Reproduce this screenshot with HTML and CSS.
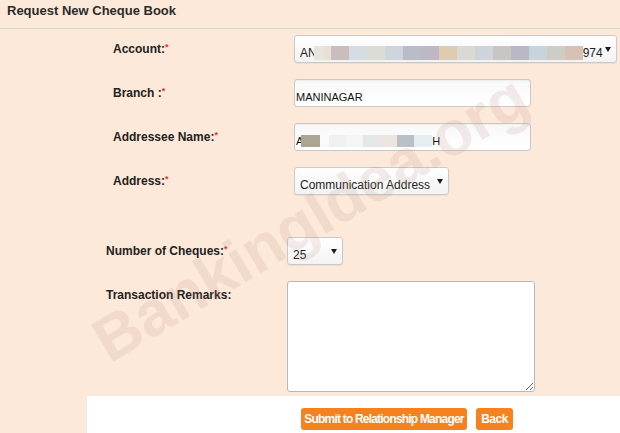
FILE: index.html
```html
<!DOCTYPE html>
<html lang="en">
<head>
<meta charset="utf-8">
<title>Request New Cheque Book</title>
<link rel="stylesheet" href="styles.css">
</head>
<body>
<div class="page">
  <div class="header">Request New Cheque Book</div>

  <div class="form-group group-top">
    <div class="label">Account:<span class="req">*</span></div>
    <div class="select select-account">AN<span class="mosaic"><i class="m1"></i><i class="m2"></i><i class="m3"></i><i class="m4"></i><i class="m5"></i><i class="m6"></i><i class="m7"></i><i class="m8"></i><i class="m9"></i><i class="m10"></i><i class="m11"></i><i class="m12"></i><i class="m13"></i><i class="m14"></i><i class="m15"></i><i class="m16"></i></span>974</div>

    <div class="label">Branch :<span class="req">*</span></div>
    <input class="input input-wide" type="text" value="MANINAGAR">

    <div class="label">Addressee Name:<span class="req">*</span></div>
    <div class="input input-wide">A<span class="mosaic mosaic-name"><i class="n1"></i><i class="n2"></i><i class="n3"></i><i class="n4"></i><i class="n5"></i><i class="n6"></i><i class="n7"></i><i class="n8"></i></span>H</div>

    <div class="label">Address:<span class="req">*</span></div>
    <div class="select select-address">Communication Address</div>
  </div>

  <div class="form-group group-bottom">
    <div class="label">Number of Cheques:<span class="req">*</span></div>
    <div class="select select-count">25</div>

    <div class="label label-top">Transaction Remarks:</div>
    <textarea class="remarks"></textarea>
  </div>

  <div class="footer">
    <button class="btn btn-submit" type="button">Submit to Relationship Manager</button>
    <button class="btn btn-back" type="button">Back</button>
  </div>

  <div class="watermark">BankingIdea.org</div>
</div>
</body>
</html>
```

FILE: styles.css
```css
* { box-sizing: border-box; }

html, body {
  margin: 0;
  padding: 0;
  height: 100%;
}

body {
  background: #fde9d9;
  font-family: "Liberation Sans", Arial, sans-serif;
  color: #222;
  overflow: hidden;
}

.page {
  position: relative;
  width: 620px;
  height: 433px;
  overflow: hidden;
}

.header {
  height: 29px;
  padding: 3px 7px 0;
  font-size: 13px;
  line-height: 16px;
  font-weight: bold;
  color: #2b2b2b;
  border-bottom: 1px solid #dcd6d1;
}

.form-group {
  display: grid;
  grid-template-columns: 181px auto;
  row-gap: 16px;
  align-items: center;
  justify-items: start;
}

.group-top {
  margin-top: 6px;
  padding-left: 113px;
}

.group-bottom {
  margin-top: 42px;
  padding-left: 106px;
}

.label {
  font-size: 12px;
  line-height: 14px;
  font-weight: bold;
  color: #222;
}

.label-top {
  align-self: start;
  padding-top: 7px;
}

.req {
  color: #e8322e;
  font-size: 9px;
  line-height: 10px;
  vertical-align: top;
}

.select {
  position: relative;
  height: 28px;
  padding: 10px 20px 2px 5px;
  font-size: 12px;
  line-height: 14px;
  color: #222;
  white-space: nowrap;
  background: linear-gradient(#ffffff, #f3f3f3);
  border: 1px solid #c9c9c9;
  border-radius: 3px;
  box-shadow: 0 1px 1px rgba(0, 0, 0, 0.06);
}

.select::after {
  content: "";
  position: absolute;
  right: 5px;
  top: 11px;
  border-left: 3px solid transparent;
  border-right: 3px solid transparent;
  border-top: 5px solid #1a1a1a;
}

.select-account { width: 323px; }
.select-address { width: 155px; }
.select-count { width: 56px; }

.input {
  display: block;
  height: 28px;
  margin: 0;
  padding: 10px 2px 2px 1px;
  font-family: "Liberation Sans", Arial, sans-serif;
  font-size: 11px;
  line-height: 14px;
  color: #111;
  white-space: nowrap;
  background: linear-gradient(#f8f8f8, #ffffff);
  border: 1px solid #c8c8c8;
  border-radius: 3px;
  box-shadow: inset 0 1px 1px rgba(0, 0, 0, 0.04);
  outline: none;
}

.input-wide { width: 237px; }

.mosaic {
  display: inline-flex;
  vertical-align: top;
  height: 14px;
  margin-left: -3px;
}

.mosaic i {
  display: block;
  width: 18px;
  height: 14px;
}

.m1 { background: #e6e4dd; width: 10px !important; }
.m2 { background: #e8e0d6; width: 7px !important; }
.m3 { background: #c9bebd; }
.m4 { background: #d5dce4; }
.m5 { background: #dbdcd3; }
.m6 { background: #cfd5dc; }
.m7 { background: #b8bdc8; }
.m8 { background: #bdb8c3; }
.m9 { background: #dfcbb2; }
.m10 { background: #d9dad3; }
.m11 { background: #d0d3d9; }
.m12 { background: #c9c5c5; }
.m13 { background: #b9b8c5; }
.m14 { background: #c9d3dc; }
.m15 { background: #cdcdc6; }
.m16 { background: #d6c2b5; }

.mosaic-name {
  height: 12px;
  margin-top: 1px;
  margin-left: -2px;
}

.mosaic-name i { height: 12px; width: 17px; }

.n1 { background: #aca594; width: 19px !important; }
.n2 { background: #fafafa; width: 9px !important; }
.n3 { background: #eff0f1; }
.n4 { background: #f4f5f5; }
.n5 { background: #e3e7ea; }
.n6 { background: #ece5df; }
.n7 { background: #b9c0c8; }
.n8 { background: #e6edef; width: 18px !important; }

.remarks {
  display: block;
  width: 248px;
  height: 111px;
  margin: 0;
  background: #fff;
  border: 1px solid #b8b8b8;
  border-radius: 3px;
  font-family: "Liberation Sans", Arial, sans-serif;
  font-size: 12px;
}

.footer {
  display: flex;
  gap: 9px;
  height: 37px;
  margin-top: 4px;
  margin-left: 87px;
  padding: 12px 0 0 214px;
  background: #fff;
}

.btn {
  height: 22px;
  padding: 0;
  border: none;
  border-radius: 3px;
  background: #f5821f;
  color: #fff;
  font-family: "Liberation Sans", Arial, sans-serif;
  font-size: 12px;
  font-weight: bold;
  letter-spacing: -0.8px;
  text-align: center;
  cursor: pointer;
}

.btn-submit { width: 166px; }
.btn-back { width: 37px; letter-spacing: -0.5px; }

.watermark {
  position: absolute;
  left: 310px;
  top: 218px;
  transform: translate(-50%, -50%) rotate(-31deg);
  font-size: 63px;
  font-weight: bold;
  white-space: nowrap;
  color: rgba(190, 150, 140, 0.18);
  pointer-events: none;
}
```
